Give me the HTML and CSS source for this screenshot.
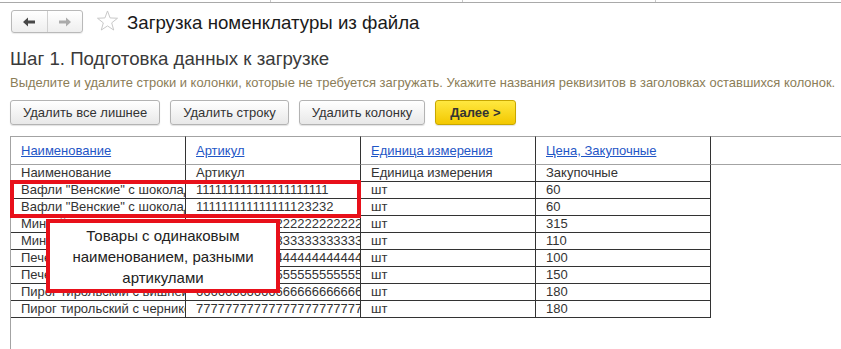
FILE: index.html
```html
<!DOCTYPE html>
<html lang="ru">
<head>
<meta charset="utf-8">
<title>Загрузка номенклатуры из файла</title>
<link rel="stylesheet" href="styles.css">
</head>
<body>
<div class="tabs"><span class="tab t1"></span><span class="tab t2"></span><span class="tab t3"></span><span class="tab rest"></span></div>
<header class="head">
  <div class="nav">
    <button class="nav-btn"><svg width="12" height="10" viewBox="0 0 12 10"><polygon points="0,5 5,0.5 5,3.6 12,3.6 12,6.4 5,6.4 5,9.5" fill="#474747"/></svg></button>
    <button class="nav-btn"><svg width="12" height="10" viewBox="0 0 12 10"><polygon points="12,5 7,0.5 7,3.6 0,3.6 0,6.4 7,6.4 7,9.5" fill="#ababab"/></svg></button>
  </div>
  <svg class="star" viewBox="0 0 24 24"><polygon points="12,1 14.7,8.28 22.46,8.6 16.37,13.42 18.47,20.9 12,16.6 5.53,20.9 7.63,13.42 1.54,8.6 9.3,8.28" fill="none" stroke="#c6c6c6" stroke-width="1"/></svg>
  <h1 class="title">Загрузка номенклатуры из файла</h1>
</header>
<h2 class="step">Шаг 1. Подготовка данных к загрузке</h2>
<p class="hint">Выделите и удалите строки и колонки, которые не требуется загружать. Укажите названия реквизитов в заголовках оставшихся колонок.</p>
<div class="toolbar">
  <button class="btn">Удалить все лишнее</button>
  <button class="btn">Удалить строку</button>
  <button class="btn">Удалить колонку</button>
  <button class="btn btn-primary">Далее &gt;</button>
</div>
<div class="grid">
  <div class="sheet">
    <div class="hcell"><a class="link" href="#">Наименование</a></div>
    <div class="hcell"><a class="link" href="#">Артикул</a></div>
    <div class="hcell"><a class="link" href="#">Единица измерения</a></div>
    <div class="hcell"><a class="link" href="#">Цена, Закупочные</a></div>
    <div class="hcell fill"></div>

    <div class="cell">Наименование</div><div class="cell">Артикул</div><div class="cell">Единица измерения</div><div class="cell">Закупочные</div><div class="cell fill"></div>
    <div class="cell">Вафли "Венские" с шоколадом</div><div class="cell">111111111111111111111</div><div class="cell">шт</div><div class="cell">60</div><div class="cell fill"></div>
    <div class="cell">Вафли "Венские" с шоколадом</div><div class="cell">111111111111111123232</div><div class="cell">шт</div><div class="cell">60</div><div class="cell fill"></div>
    <div class="cell">Минтай филе с/м</div><div class="cell">2222222222222222222222222222</div><div class="cell">шт</div><div class="cell">315</div><div class="cell fill"></div>
    <div class="cell">Минтай тушка с/м</div><div class="cell">3333333333333333333333333333</div><div class="cell">шт</div><div class="cell">110</div><div class="cell fill"></div>
    <div class="cell">Печенье овсяное</div><div class="cell">4444444444444444444444444444</div><div class="cell">шт</div><div class="cell">100</div><div class="cell fill"></div>
    <div class="cell">Печенье сахарное</div><div class="cell">5555555555555555555555555555</div><div class="cell">шт</div><div class="cell">150</div><div class="cell fill"></div>
    <div class="cell">Пирог тирольский с вишней</div><div class="cell">6666666666666666666666666666</div><div class="cell">шт</div><div class="cell">180</div><div class="cell fill"></div>
    <div class="cell">Пирог тирольский с черникой</div><div class="cell">7777777777777777777777777777</div><div class="cell">шт</div><div class="cell">180</div><div class="cell fill"></div>
  </div>
  <div class="mark"></div>
  <div class="callout">Товары с одинаковым<br>наименованием, разными<br>артикулами</div>
</div>
</body>
</html>
```
FILE: styles.css
```css
html, body {
  margin: 0;
  height: 100%;
}
body {
  font-family: "Liberation Sans", Arial, sans-serif;
  background: #fff;
  display: flex;
  flex-direction: column;
  overflow: hidden;
}
.tabs {
  display: flex;
  flex: none;
  height: 2px;
  border-bottom: 1px solid #a9a9a9;
}
.tab { border-right: 1px solid #c8c8c8; }
.t1 { width: 270px; }
.t2 { width: 191px; }
.t3 { width: 192px; }
.rest { flex: 1; border-right: 0; }

.head {
  display: flex;
  align-items: center;
  flex: none;
  height: 23px;
  margin: 7px 0 0 11px;
}
.nav {
  display: flex;
  width: 72px;
  height: 23px;
  box-sizing: border-box;
  border: 1px solid #b9b9b9;
  border-radius: 3px;
  background: linear-gradient(#ffffff, #eeeeee);
  box-shadow: 0 1px 1px rgba(0, 0, 0, 0.08);
}
.nav-btn {
  flex: 1;
  display: flex;
  align-items: center;
  justify-content: center;
  border: 0;
  background: none;
  padding: 0;
}
.nav-btn + .nav-btn { border-left: 1px solid #d0d0d0; }
.star {
  width: 23px;
  height: 23px;
  margin-left: 13px;
}
.title {
  margin: 0 0 0 8px;
  font-size: 18.67px;
  font-weight: normal;
  line-height: 23px;
  padding-top: 1px;
  color: #1a1a1a;
}
.step {
  flex: none;
  margin: 15px 0 0 10px;
  font-size: 18.67px;
  font-weight: normal;
  line-height: 22px;
  color: #3a3a3a;
}
.hint {
  flex: none;
  margin: 5px 0 0 10px;
  font-size: 12.95px;
  line-height: 15px;
  color: #8b7d57;
  white-space: nowrap;
}
.toolbar {
  flex: none;
  display: flex;
  gap: 10px;
  margin: 10px 0 0 10px;
}
.btn {
  height: 25px;
  box-sizing: border-box;
  padding: 0 12px;
  border: 1px solid #b3b3b3;
  border-radius: 3px;
  background: linear-gradient(#ffffff, #e8e8e8);
  box-shadow: 0 1px 1px rgba(0, 0, 0, 0.12);
  font-family: "Liberation Sans", Arial, sans-serif;
  font-size: 13px;
  color: #333;
}
.btn-primary {
  padding: 0 14px;
  background: linear-gradient(#ffe840, #f3c800);
  border-color: #c8a700;
  font-weight: bold;
  font-size: 13px;
  color: #333;
}
.grid {
  flex: 1;
  position: relative;
  margin: 11px 0 0 10px;
  border-left: 1px solid #a3a3a3;
}
.sheet {
  display: grid;
  grid-template-columns: repeat(4, 175px) 1fr;
  font-size: 13px;
}
.hcell {
  height: 29px;
  box-sizing: border-box;
  border-top: 1px solid #a3a3a3;
  border-bottom: 1px solid #a3a3a3;
  border-right: 1px solid #333;
  padding-left: 10px;
  line-height: 27px;
  white-space: nowrap;
  overflow: hidden;
}
.hcell.fill { border-right: 0; }
.link {
  color: #1f56c6;
  text-decoration: underline;
}
.cell {
  height: 17px;
  box-sizing: border-box;
  border-right: 1px solid #333;
  border-bottom: 1px solid #333;
  padding-left: 10px;
  line-height: 16px;
  color: #333;
  white-space: nowrap;
  overflow: hidden;
}
.cell.fill { border: 0; }
.mark {
  position: absolute;
  left: -1px;
  top: 44px;
  width: 351px;
  height: 38px;
  box-sizing: border-box;
  border: 4px solid #e8101a;
}
.callout {
  position: absolute;
  left: 35px;
  top: 83px;
  width: 234px;
  height: 74px;
  box-sizing: border-box;
  border: 4px solid #e8101a;
  background: #fff;
  display: flex;
  align-items: center;
  justify-content: center;
  text-align: center;
  font-size: 15px;
  line-height: 21px;
  color: #222;
}
```
